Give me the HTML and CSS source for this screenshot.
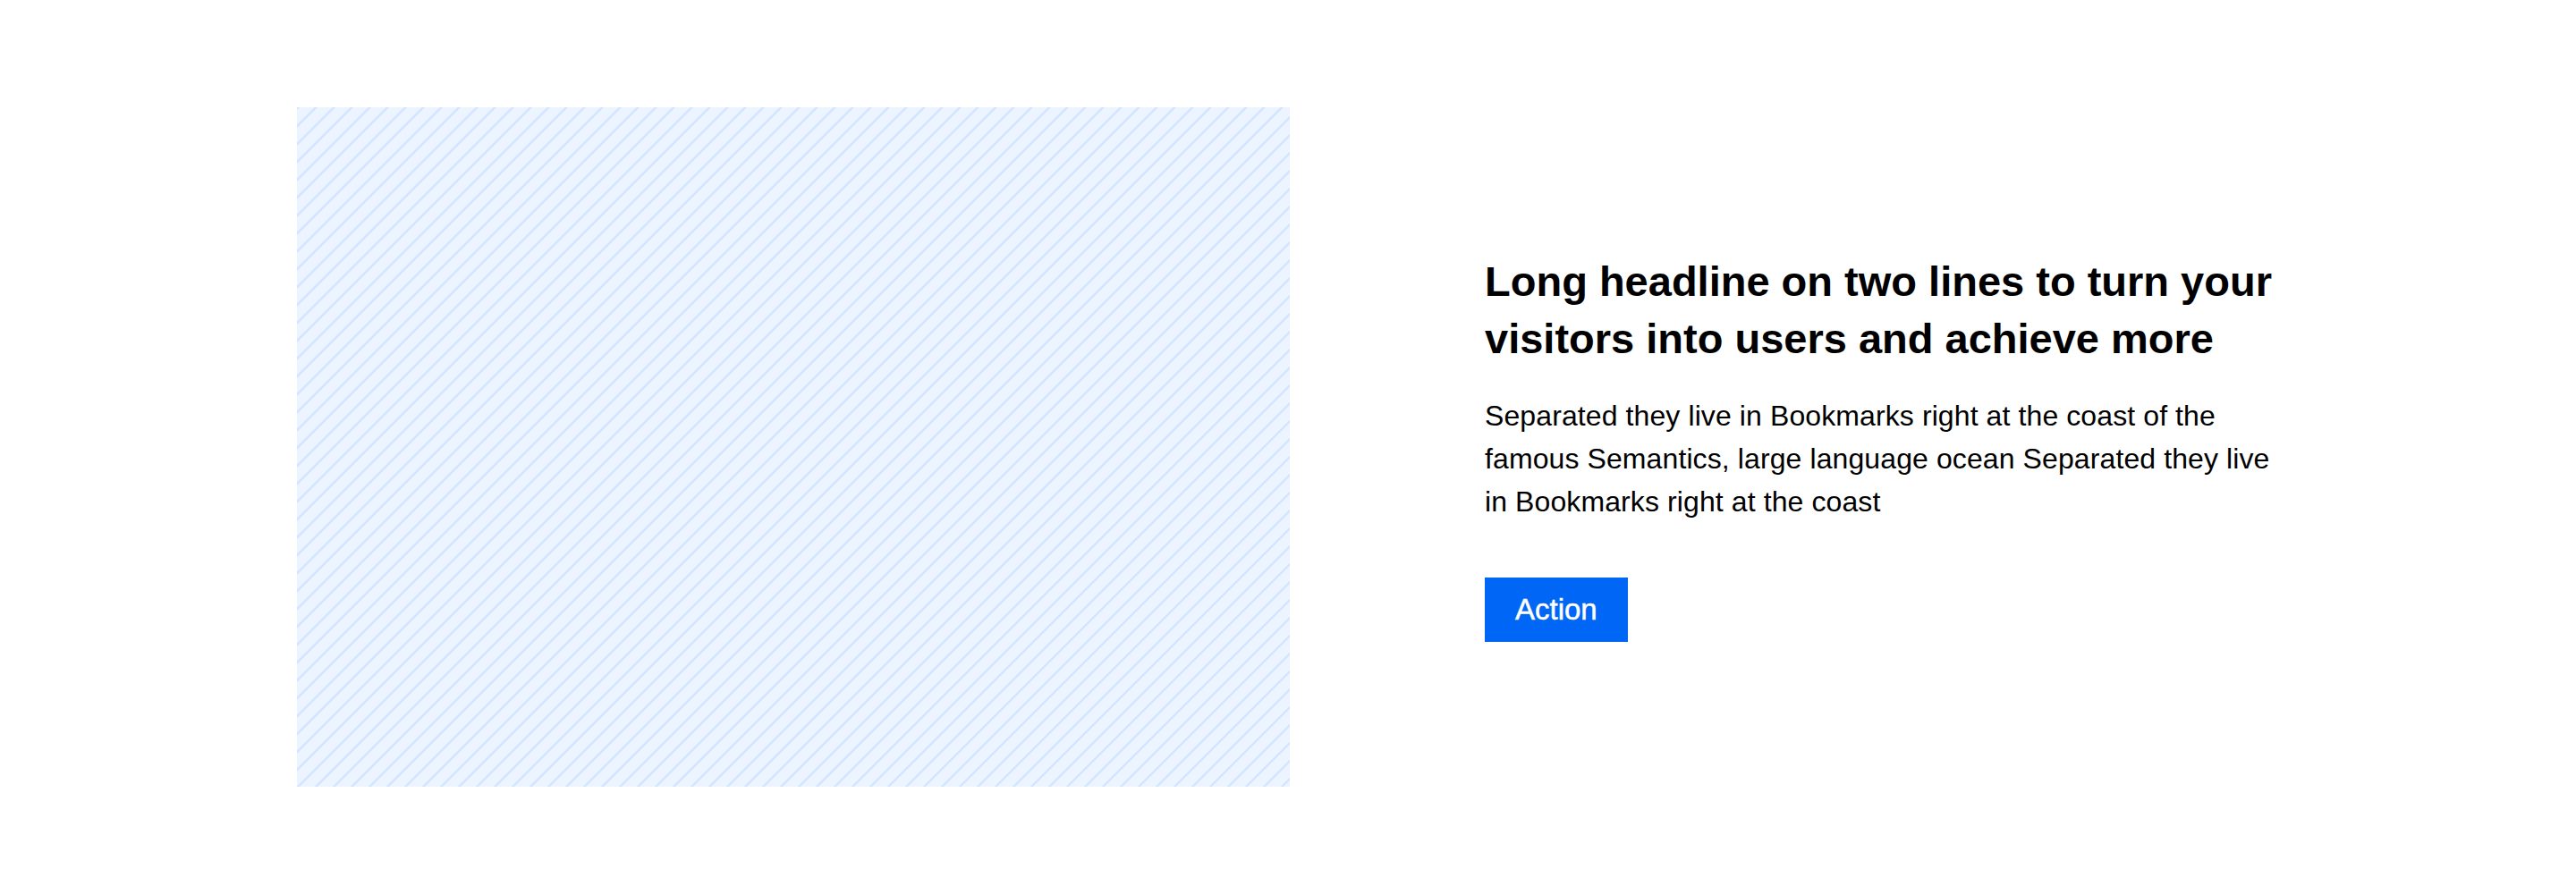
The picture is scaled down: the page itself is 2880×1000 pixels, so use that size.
FILE: index.html
```html
<!DOCTYPE html>
<html lang="en">
<head>
<meta charset="utf-8">
<title>Feature</title>
<link rel="stylesheet" href="styles.css">
</head>
<body>
<section class="feature">
  <div class="media" aria-hidden="true"></div>
  <div class="content">
    <h2 class="headline">Long headline on two lines to turn your visitors into users and achieve more</h2>
    <p class="lead">Separated they live in Bookmarks right at the coast of the famous Semantics, large language ocean Separated they live in Bookmarks right at the coast</p>
    <a class="action" href="#">Action</a>
  </div>
</section>
</body>
</html>
```
FILE: styles.css
```css
html, body {
  margin: 0;
  padding: 0;
  background: #ffffff;
}

body {
  font-family: "Liberation Sans", Arial, Helvetica, sans-serif;
  color: #000000;
}

.feature {
  display: flex;
  align-items: center;
  gap: 218px;
  padding: 120px 332px;
}

.media {
  flex: 0 0 1110px;
  height: 760px;
  background-color: #ecf5ff;
  background-image: repeating-linear-gradient(135deg, #d4e6ff 0, #d4e6ff 2px, #ecf5ff 2.6px, #ecf5ff 14.14px);
}

.content {
  flex: 1 1 auto;
  display: flex;
  flex-direction: column;
  align-items: flex-start;
  padding-top: 1px;
}

.headline {
  margin: 0;
  font-size: 47px;
  line-height: 64px;
  font-weight: 700;
}

.lead {
  margin: 30px 0 0;
  font-size: 32px;
  line-height: 48px;
  letter-spacing: 0.1px;
}

.action {
  margin-top: 61px;
  display: inline-flex;
  align-items: center;
  justify-content: center;
  height: 72px;
  padding: 0 34px;
  background: #0066f5;
  color: #ffffff;
  font-size: 33px;
  text-decoration: none;
  -webkit-text-stroke: 0.5px #ffffff;
}
```
